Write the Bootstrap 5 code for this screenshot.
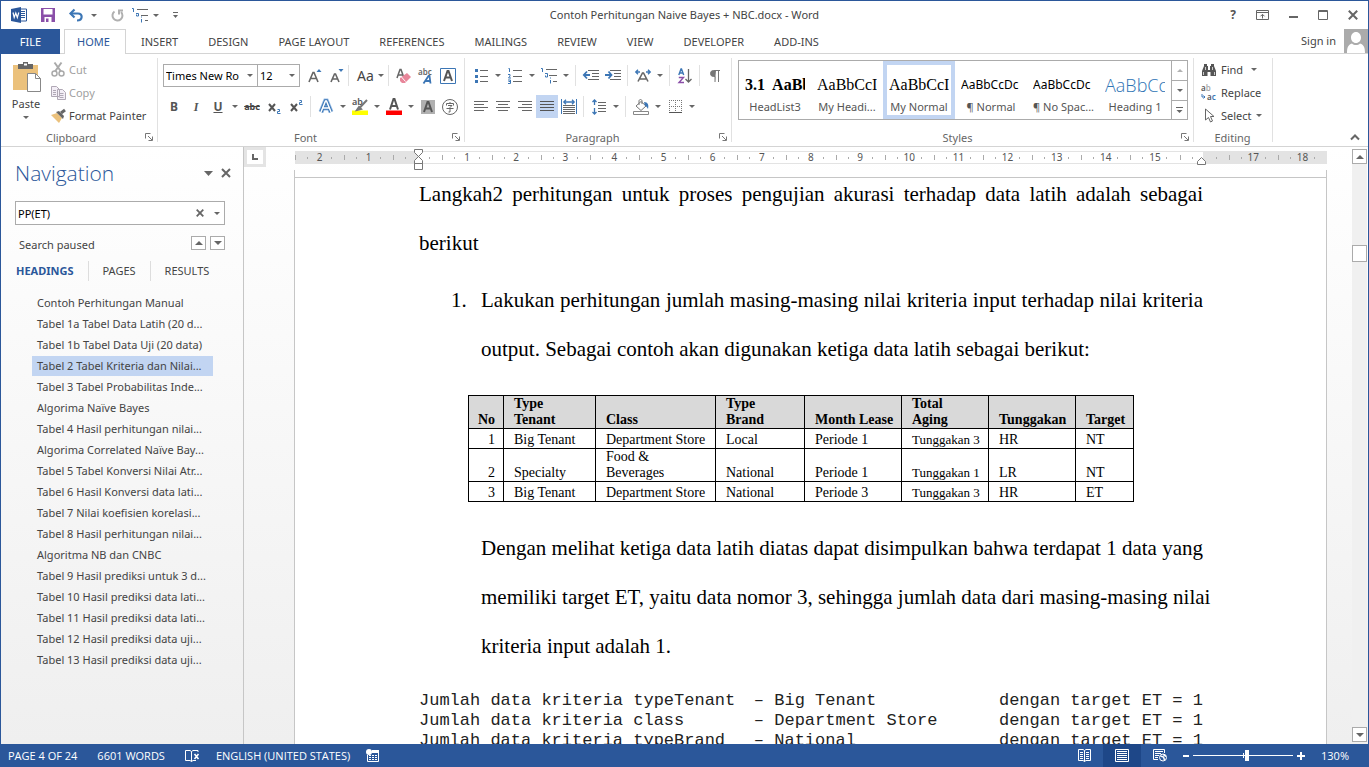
<!DOCTYPE html>
<html lang="en">
<head>
<meta charset="utf-8">
<meta name="viewport" content="width=device-width, initial-scale=1">
<title>Contoh Perhitungan Naive Bayes + NBC.docx - Word</title>
<link href="https://cdn.jsdelivr.net/npm/bootstrap@5.3.0/dist/css/bootstrap.min.css" rel="stylesheet">
<style>
:root{--word:#2b579a;--ink:#444;--line:#d4d4d4;--pick:#c2d5f2}
body{font:11px/16px "Noto Sans","Open Sans",sans-serif;color:var(--ink);background:#fff}
.app{height:100vh;border:1px solid var(--word);border-bottom:0;overflow:hidden}
button,input{font:inherit;color:inherit}
.plain{background:none;border:0;padding:0;display:inline-flex;align-items:center;justify-content:center;color:inherit;flex:none}
svg{display:block;flex:none;overflow:visible}
.titlebar{height:28px}
.qat{left:10px;top:0;height:28px}
.qgap{margin-left:14px}
.winbtns{right:10px;top:0;height:28px}
.car{width:0;height:0;border:3px solid transparent;border-top-color:#666;border-bottom:0;flex:none}
.car-up{border:3px solid transparent;border-bottom-color:#666;border-top:0}
.car-lg{border-width:4px 4px 0}
.car-up.car-lg{border-width:0 4px 4px}
.tabs{height:25px;border-bottom:1px solid var(--line)}
.tabs .nav-link{padding:0 15px;height:25px;line-height:25px;color:var(--ink);border:0;border-radius:0;margin-right:0}
.tabs .file{background:var(--word);color:#fff;width:59px;padding:0;text-align:center;margin-right:4px}
.tabs .home{background:#fff;color:var(--word);border:1px solid var(--line);border-bottom:0;padding:0 12px;line-height:24px;width:62px}
.avatar{width:24px;height:24px}
.ribbon{height:93px;border-bottom:1px solid var(--line)}
.grp{border-right:1px solid #e1e1e1;margin:4px 0 4px;height:84px;position:relative;flex:none}
.grp-name{height:16px;color:#666;text-align:center}
.launch{position:absolute;right:4px;bottom:1px}
.g-clip{width:157px}.g-font{width:307px;padding-left:5px}.g-para{width:267px;padding-left:5px}
.g-style{width:462px;padding-left:6px}.g-edit{width:79px;padding-left:7px}
.tools{height:72px}
.g-style .tools{padding-top:2px}
.paste{width:50px}
.trow{height:23px;margin-bottom:8px}
.trow.first{margin-top:6px}
.ib{width:22px;height:23px}
.ic{width:12px;height:23px}
.vsep{width:1px;height:21px;background:#e1e1e1;margin:0 4px 0 3px;flex:none}
.combo{height:23px;border:1px solid #ababab;background:#fff}
.combo input{border:0;outline:0;padding:0 0 0 2px;height:21px;color:#000;background:none;min-width:0}
.c-face{width:95px}.c-size{width:43px;margin-left:-1px}
.on{background:var(--pick)}
.b{font-size:12px;font-weight:700;color:#555}
.dim{color:#a0a0a0}
.crow{height:23px;gap:4px;justify-content:flex-start}
.gallery{border:1px solid #ababab;height:60px;width:450px}
.sty{width:72px;height:58px;border:0;background:#fff;padding:0 6px;color:#555;white-space:nowrap;overflow:hidden}
.sty .smp{height:28px;line-height:28px;overflow:hidden;color:#000;font-size:12px;margin-top:5px;text-align:left}
.sty.cur{box-shadow:inset 0 0 0 4px var(--pick)}
.sty .serif{font-family:"Liberation Serif",serif;font-size:16px}
.sty .h1s{font-family:"Open Sans",sans-serif;font-size:18px;font-weight:300;color:#2e74b5}
.gscroll{width:16px;border-left:1px solid #ababab}
.gscroll button{height:19px}
.gscroll button+button{border-top:1px solid #ababab;height:20px}
.work{min-height:0;background:linear-gradient(#fff,#efefef)}
.navpane{width:243px;border-right:1px solid #c6c6c6;padding:0 18px 0 14px;flex:none}
.navpane h1{font-family:"Open Sans",sans-serif;font-size:21px;line-height:28px;font-weight:300;color:var(--word);margin:0}
.nhead{margin:12px -6px 0 0;height:28px}
.search{height:24px;border:1px solid #ababab;background:#fff;margin-top:14px}
.clear{margin-right:6px}
.mini{width:15px;height:14px;border:1px solid #ababab;background:#fff;padding:0}
.ntabs{height:20px;margin-top:8px}
.ntabs a{color:var(--ink);text-decoration:none;padding:0 14px;line-height:20px;border-right:1px solid #ddd}
.ntabs a:first-child{padding-left:1px;color:var(--word);font-weight:700}
.ntabs a:last-child{border:0}
.heads{margin:12px 12px 0 17px}
.heads a{display:block;height:20px;line-height:20px;margin-bottom:1px;padding-left:5px;color:var(--ink);text-decoration:none;white-space:nowrap}
.canvas{min-width:0;padding-right:1px}
.docarea{min-width:0}
.tabsel{width:22px;height:20px;border:3px solid #e4e4e4;background:#fff;flex:none}
.ruler{height:13px;margin:4px 25px 0 29px;border:1px solid #e3e3e3;border-width:1px 0;background:linear-gradient(90deg,#e3e3e3 12%,#fff 12%,#fff 88%,#e3e3e3 88%);line-height:11px;font-size:10px;color:#555}
.cm{background:linear-gradient(#aaa,#aaa) 0 3px/1px 5px no-repeat,linear-gradient(#aaa,#aaa) 25% 5px/1px 2px no-repeat,linear-gradient(#aaa,#aaa) 75% 5px/1px 2px no-repeat;text-align:center;height:11px;flex:1 1 0;position:relative}
.cm svg{position:absolute;left:50%;margin-left:-4px;z-index:1}
.cm .m-l{top:-3px}
.cm .m-r{top:5px;margin-left:-7px}
.sheet{margin:3px 25px 0 50px;background:#fff;border:1px solid #c6c6c6;border-width:0 1px;padding:0 123px 0 124px;position:relative;font:21px/49px "Liberation Serif",serif;color:#000;min-height:0;overflow:hidden}
.sheet::before{content:"";position:absolute;left:0;right:0;top:7px;border-top:1px solid #c6c6c6}
.sheet p,.sheet li{margin:0;text-align:justify}
.sheet ol{margin:8px 0 0;padding-left:62px;list-style:none;counter-reset:step}
.sheet li::before{counter-increment:step;content:counter(step) ".";display:inline-block;width:30px;margin-left:-30px;text-align:left}
.cont{padding-left:62px}
.tblwrap{margin:21px 69px 22px 49px}
.dtab{width:100%;border-collapse:collapse;font:14px/16px "Liberation Serif",serif;color:#000;table-layout:fixed}
.dtab td,.dtab th{border:1px solid #000;padding:0 0 0 10px;vertical-align:bottom;white-space:nowrap}
.dtab th{background:#d9d9d9}
.dtab td{height:20px}
.dtab td:first-child,.dtab th:first-child{text-align:right;padding:0 8px 0 0}
.dtab .sm{font-size:13px}
.code{font:17px/20px "Liberation Mono",monospace;margin-top:20px;color:#222}
.code>div{display:grid;grid-template-columns:334fr 240fr 208fr;white-space:nowrap}
.code span:last-child{text-align:right}
.vscroll{width:15px;background:#f0f0f0;margin-top:2px;margin-bottom:2px}
.vscroll button{width:15px;height:15px;border:1px solid #ababab;background:#fff;padding:0}
.vthumb{height:17px;border:1px solid #ababab;background:#fff;margin-top:81px}
.status{height:23px;background:var(--word);color:#fff;margin:0 -1px;padding-left:8px;font-family:"Open Sans","Noto Sans",sans-serif}
.vw{width:38px;height:23px}
.vw.act{background:#1e4788}
.zoom{appearance:none;width:100px;height:23px;background:linear-gradient(#fff,#fff) 0 11px/100% 1px no-repeat,linear-gradient(#fff,#fff) 50% 9px/1px 5px no-repeat}
.zoom::-webkit-slider-thumb{appearance:none;width:4px;height:11px;background:#fff}
</style>
</head>
<body>
<svg width="0" height="0" class="position-absolute" aria-hidden="true"><defs>
<g id="launch" fill="none" stroke="#777"><path d="M.5 5.5v-5h5M3 3l4 4M7.500 3.500v4h-4"/></g>
</defs></svg>
<div class="app d-flex flex-column">

<header class="titlebar position-relative d-flex align-items-center justify-content-center flex-shrink-0">
  <div class="qat position-absolute d-flex align-items-center">
    <svg width="16" height="16" viewBox="0 0 16 16"><path d="M9 2h6.500v12H9" fill="#fff" stroke="#2b579a"/><path d="M10 4.500h4M10 6.500h4M10 8.500h4M10 10.500h4" stroke="#2b579a"/><path d="M0 2 10 0v16L0 14z" fill="#2b579a"/><path d="M2 5.500 3.200 10.500 4.800 6l1.500 4.500L7.800 5.500" fill="none" stroke="#fff" stroke-width="1.200"/></svg>
    <button class="plain qgap" aria-label="Save"><svg width="14" height="14" viewBox="0 0 14 14"><path d="M0 0h14v14H0z" fill="#8a4fa8"/><path d="M2.500 1h9v5.500h-9zM3.500 9h7v5h-7z" fill="#fff"/><path d="M5 10.500h2.500V14H5z" fill="#8a4fa8"/></svg></button>
    <button class="plain qgap" aria-label="Undo"><svg width="14" height="13" viewBox="0 0 14 13"><path d="M1.500 4.500H9c5 0 5 7-1 7" fill="none" stroke="#3c76b5" stroke-width="2.200"/><path d="M5.500.5l-4 4 4 4" fill="none" stroke="#3c76b5" stroke-width="2.200"/></svg></button>
    <span class="car ms-2"></span>
    <button class="plain qgap" aria-label="Redo"><svg width="13" height="13" viewBox="0 0 13 13"><path d="M3.500 2.500A5 5 0 1 0 10 3" fill="none" stroke="#b0b0b0" stroke-width="2"/><path d="M8 5.500V1M7 1.500h5" fill="none" stroke="#b0b0b0" stroke-width="2"/></svg></button>
    <button class="plain ms-2" aria-label="Multilevel list"><svg width="17" height="16" viewBox="0 0 17 16"><path d="M5 2.500h11M9 8.500h7M13 13.500h3" stroke="#666"/><path d="M0 1.500h1.500V5M4 6.500h2.500V9H4.500V7.500M9.500 9.500v1M9.500 12v3.500" fill="none" stroke="#3c76b5"/></svg></button>
    <span class="car ms-1"></span>
    <button class="plain qgap" aria-label="Customize Quick Access Toolbar"><svg width="5" height="6" viewBox="0 0 5 6"><path d="M0 .5h5" stroke="#666"/><path d="M0 3h5L2.500 6z" fill="#666"/></svg></button>
  </div>
  <div>Contoh Perhitungan Naive Bayes + NBC.docx - Word</div>
  <div class="winbtns position-absolute d-flex align-items-center gap-3">
    <button class="plain b me-1" aria-label="Help">?</button>
    <button class="plain me-1" aria-label="Ribbon display"><svg width="13" height="10" viewBox="0 0 13 10"><path d="M.5.5h12v9H.5zM.5 2.500h12M6.500 8.500v-4M4.500 6.300l2-2 2 2" fill="none" stroke="#666"/></svg></button>
    <button class="plain me-1" aria-label="Minimize"><svg width="9" height="10" viewBox="0 0 9 10"><path d="M0 7h9" stroke="#666" stroke-width="2"/></svg></button>
    <button class="plain me-1" aria-label="Maximize"><svg width="10" height="10" viewBox="0 0 10 10"><path d="M.5.5h9v9H.5zM0 1.500h10" fill="none" stroke="#666"/></svg></button>
    <button class="plain" aria-label="Close"><svg width="10" height="10" viewBox="0 0 10 10"><path d="M.8.8l8.400 8.400M9.200.8.8 9.200" stroke="#666" stroke-width="2"/></svg></button>
  </div>
</header>

<nav class="tabs nav nav-tabs flex-nowrap flex-shrink-0">
  <a class="nav-link file" href="#">FILE</a>
  <a class="nav-link home" href="#">HOME</a>
  <a class="nav-link" href="#">INSERT</a>
  <a class="nav-link" href="#">DESIGN</a>
  <a class="nav-link" href="#">PAGE LAYOUT</a>
  <a class="nav-link" href="#">REFERENCES</a>
  <a class="nav-link" href="#">MAILINGS</a>
  <a class="nav-link" href="#">REVIEW</a>
  <a class="nav-link" href="#">VIEW</a>
  <a class="nav-link" href="#">DEVELOPER</a>
  <a class="nav-link" href="#">ADD-INS</a>
  <a class="ms-auto text-reset text-decoration-none d-flex align-items-center gap-2" href="#">Sign in
    <svg class="avatar" viewBox="0 0 24 24"><path d="M0 0h24v24H0z" fill="#ababab"/><path d="M12 3c3 0 5 2.500 5 5.500S15 14 12 14s-5-2.500-5-5.500S9 3 12 3zM3 24c0-5 1-8.500 5-9.500 2 2 6 2 8 0 4 1 5 4.500 5 9.500z" fill="#fff"/></svg></a>
</nav>

<section class="ribbon d-flex flex-shrink-0">
  <div class="grp g-clip">
    <div class="tools d-flex">
      <button class="plain paste flex-column justify-content-start">
        <svg class="mt-1" width="29" height="30" viewBox="0 0 29 30"><path d="M1 3h25v25H1z" fill="#ebc17c"/><path d="M6 2h5V0h5v2h5v5H6z" fill="#666"/><path d="M12 1.500h3v2h-3z" fill="#fff"/><path d="M15.500 11.500h8l5 5v13h-13z" fill="#fff" stroke="#888"/><path d="M23.500 11.500v5h5" fill="none" stroke="#888"/></svg>
        <span class="mt-1">Paste</span><span class="car mt-1"></span></button>
      <div class="d-flex flex-column align-items-start">
        <button class="plain crow dim"><svg width="14" height="15" viewBox="0 0 14 15"><path d="M3.500.5l6.500 9M10.500.5l-6.500 9" stroke="#aaa" stroke-width="2"/><circle cx="3.500" cy="11.500" r="2.500" fill="none" stroke="#aaa" stroke-width="1.500"/><circle cx="10.500" cy="11.500" r="2.500" fill="none" stroke="#aaa" stroke-width="1.500"/></svg>Cut</button>
        <button class="plain crow dim"><svg width="14" height="14" viewBox="0 0 14 14"><path d="M.5.5h5l3 3v7h-8zM6.500 3.500h5l3 3v7h-8z" fill="#f3eef6" stroke="#b0a8b5"/><path d="M2 4.500h3M2 6.500h3M2 8.500h3M8.500 7.500h4M8.500 9.500h4M8.500 11.500h4" stroke="#b0a8b5"/></svg>Copy</button>
        <button class="plain crow"><svg width="14" height="14" viewBox="0 0 14 14"><path d="M0 6l6-2 5 5-3 5z" fill="#ebc17c"/><path d="M5 3l3-1 5 5-1 3z" fill="#666"/><path d="M10 4l4-3" stroke="#666" stroke-width="3"/></svg>Format Painter</button>
      </div>
    </div>
    <div class="grp-name pe-3">Clipboard</div>
    <button class="plain launch" aria-label="Clipboard options"><svg width="8" height="8"><use href="#launch"/></svg></button>
  </div>

  <div class="grp g-font">
    <div class="tools d-flex flex-column">
      <div class="trow first d-flex align-items-center">
        <div class="combo c-face d-flex align-items-center"><input class="flex-grow-1 w-100" aria-label="Font" value="Times New Ro"><span class="car me-1"></span></div>
        <div class="combo c-size d-flex align-items-center"><input class="flex-grow-1 w-100" aria-label="Font size" value="12"><span class="car me-1"></span></div>
        <button class="plain ib ms-1" aria-label="Grow font"><svg width="14" height="16" viewBox="0 0 14 16"><path d="M1 14 5 4.500h1L10 14M2.500 10.500h6" fill="none" stroke="#666" stroke-width="1.600"/><path d="M8.500 4h5L11 1z" fill="#3c76b5"/></svg></button>
        <button class="plain ib" aria-label="Shrink font"><svg width="14" height="16" viewBox="0 0 14 16"><path d="M1 14l3.500-8h1L9 14M2.500 11h5" fill="none" stroke="#666" stroke-width="1.600"/><path d="M8.500 1h5L11 4z" fill="#3c76b5"/></svg></button>
        <span class="vsep ms-0"></span>
        <button class="plain ps-1 gap-1 fs-6"><small>Aa</small><span class="car"></span></button>
        <span class="vsep ms-1"></span>
        <button class="plain ib" aria-label="Clear formatting"><svg width="15" height="16" viewBox="0 0 15 16"><path d="M1 10 4 1.500h1L8 10M2 7h5" fill="none" stroke="#666" stroke-width="1.500"/><path d="M4 10l7-5 4 4-6 6H6l-2-2z" fill="#e8869a"/><path d="M5.500 9l4 4.500" stroke="#fff"/></svg></button>
        <button class="plain ib" aria-label="Text effects"><svg width="15" height="16" viewBox="0 0 15 16"><text x="0" y="7" font-size="8" font-weight="600" fill="#666">abc</text><path d="M5.500 15.500 10.500 8h1l1 7.500M7.500 13h5" fill="none" stroke="#3c76b5" stroke-width="1.800"/></svg></button>
        <button class="plain ib" aria-label="Character border"><svg width="16" height="16" viewBox="0 0 16 16"><path d="M.5.5h15v15H.5z" fill="none" stroke="#3c76b5"/><path d="M4 13 7.500 3h1L12 13M5 9.500h6" fill="none" stroke="#555" stroke-width="2"/></svg></button>
      </div>
      <div class="trow d-flex align-items-center">
        <button class="plain ib b">B</button>
        <button class="plain ib b fst-italic" style="font-family:'Liberation Serif',serif">I</button>
        <button class="plain ib b text-decoration-underline">U</button><button class="plain ic" aria-label="Underline style"><span class="car"></span></button>
        <button class="plain ib text-decoration-line-through fw-bold" style="font-size:9px">abc</button>
        <button class="plain ib" aria-label="Subscript"><svg width="13" height="14" viewBox="0 0 13 14"><path d="M1 4l6 7M7 4l-6 7" stroke="#555" stroke-width="2"/><path d="M9.500 9.500h2v2h-2v2h3" fill="none" stroke="#3c76b5"/></svg></button>
        <button class="plain ib" aria-label="Superscript"><svg width="13" height="14" viewBox="0 0 13 14"><path d="M1 4l6 7M7 4l-6 7" stroke="#555" stroke-width="2"/><path d="M9.500.5h2v2h-2v2h3" fill="none" stroke="#3c76b5"/></svg></button>
        <span class="vsep"></span>
        <button class="plain ib" aria-label="Text outline"><svg width="14" height="15" viewBox="0 0 14 15"><path d="M2 13 6.500 2h1L12 13M4 9h6" fill="none" stroke="#9dc0e6" stroke-width="5"/><path d="M2 13 6.500 2h1L12 13M4 9h6" fill="none" stroke="#3c76b5" stroke-width="3.500"/><path d="M2 13 6.500 2h1L12 13M4 9h6" fill="none" stroke="#fff" stroke-width="1.500"/></svg></button><button class="plain ic" aria-label="Text outline options"><span class="car"></span></button>
        <button class="plain ib" aria-label="Highlight"><svg width="16" height="17" viewBox="0 0 16 17"><path d="M0 12.500h16V17H0z" fill="#ff0"/><text x="0" y="7" font-size="9" font-weight="600" fill="#555">ab</text><path d="M7 10.500l8-8.500M5 12l4-1-2-2z" stroke="#777" stroke-width="2"/></svg></button><button class="plain ic" aria-label="Highlight color"><span class="car"></span></button>
        <button class="plain ib" aria-label="Font color"><svg width="16" height="17" viewBox="0 0 16 17"><path d="M0 12.500h16V17H0z" fill="red"/><path d="M4 11.500 7.500 1h1L12 11.500M5 8h6" fill="none" stroke="#555" stroke-width="2"/></svg></button><button class="plain ic" aria-label="Font color options"><span class="car"></span></button>
        <button class="plain ib" aria-label="Character shading"><svg width="14" height="14" viewBox="0 0 14 14"><path d="M0 0h14v14H0z" fill="#b0b0b0"/><path d="M3 12 6.500 2h1L11 12M4 8.500h6" fill="none" stroke="#555" stroke-width="2"/></svg></button>
        <button class="plain ib" aria-label="Enclose characters"><svg width="16" height="16" viewBox="0 0 16 16"><circle cx="8" cy="8" r="7.500" fill="none" stroke="#666"/><path d="M8 3v1.500M4.500 6.500v-2h7v2M6 6.500h4L8 8.500V13H6.500M4.500 9.500h7" fill="none" stroke="#666"/></svg></button>
      </div>
    </div>
    <div class="grp-name pe-3">Font</div>
    <button class="plain launch" aria-label="Font options"><svg width="8" height="8"><use href="#launch"/></svg></button>
  </div>

  <div class="grp g-para">
    <div class="tools d-flex flex-column">
      <div class="trow first d-flex align-items-center">
        <button class="plain ib" aria-label="Bullets"><svg width="13" height="14" viewBox="0 0 13 14"><path d="M5 1.500h8M5 7.500h8M5 12.500h8" stroke="#666"/><path d="M0 0h3v3H0zM0 6h3v3H0zM0 11h3v3H0z" fill="#3c76b5"/></svg></button><button class="plain ic" aria-label="Bullet library"><span class="car"></span></button>
        <button class="plain ib" aria-label="Numbering"><svg width="14" height="16" viewBox="0 0 14 16"><path d="M5 2.500h9M5 8.500h9M5 13.500h9" stroke="#666"/><path d="M.5.500h1V4M0 6.500h2v1.500L.5 10H3M0 12h2.500v3.500H0M.5 13.500h2" fill="none" stroke="#3c76b5"/></svg></button><button class="plain ic" aria-label="Numbering library"><span class="car"></span></button>
        <button class="plain ib" aria-label="Multilevel list"><svg width="16" height="16" viewBox="0 0 16 16"><path d="M5 1.500h11M8 7.500h8M12 13.500h4" stroke="#666"/><path d="M0 .5h1.500V4M4 5.500h2.500V9H4.500V7.500M9.500 9.500v1M9.500 12v3.500" fill="none" stroke="#3c76b5"/></svg></button><button class="plain ic" aria-label="List library"><span class="car"></span></button>
        <span class="vsep"></span>
        <button class="plain ib" aria-label="Decrease indent"><svg width="16" height="11" viewBox="0 0 16 11"><path d="M5 .5h11M9 3.500h7M9 6.500h7M5 9.500h11" stroke="#666"/><path d="M7 5H1M4 1.500.8 5 4 8.500" fill="none" stroke="#3c76b5" stroke-width="1.800"/></svg></button>
        <button class="plain ib" aria-label="Increase indent"><svg width="16" height="11" viewBox="0 0 16 11"><path d="M5 .5h11M9 3.500h7M9 6.500h7M5 9.500h11" stroke="#666"/><path d="M0 5h6M3.500 1.500 6.500 5l-3 3.500" fill="none" stroke="#3c76b5" stroke-width="1.800"/></svg></button>
        <span class="vsep"></span>
        <button class="plain ib" aria-label="Asian layout"><svg width="16" height="13" viewBox="0 0 16 13"><path d="M3 12.500 7.500 4h1L13 12.500M5 10h6" fill="none" stroke="#666" stroke-width="1.600"/><path d="M5 3H1M3 .8.8 3 3 5.200M11 3h4M13 .8 15.200 3 13 5.200" fill="none" stroke="#3c76b5" stroke-width="1.400"/></svg></button><button class="plain ic" aria-label="Asian layout options"><span class="car"></span></button>
        <span class="vsep"></span>
        <button class="plain ib" aria-label="Sort"><svg width="14" height="16" viewBox="0 0 14 16"><path d="M.8 7 3 1h.5l2.200 6M1.500 5h3.500" fill="none" stroke="#3c76b5" stroke-width="1.400"/><path d="M.8 9.500h4.700L1 14.500h5" fill="none" stroke="#8a4fa8" stroke-width="1.400"/><path d="M10.500 1v13M7.500 11l3 3 3-3" fill="none" stroke="#666" stroke-width="1.300"/></svg></button>
        <span class="vsep"></span>
        <button class="plain ib" aria-label="Show marks"><svg width="10" height="12" viewBox="0 0 10 12"><path d="M6 .5H3.500a3 3 0 0 0 0 6H5V12M5.500.5H10M8.500.5V12" fill="#777" stroke="#777"/><path d="M6.500 1v11h1V1z" fill="#fff"/></svg></button>
      </div>
      <div class="trow d-flex align-items-center">
        <button class="plain ib" aria-label="Align left"><svg width="14" height="11" viewBox="0 0 14 11"><path d="M0 .5h14M0 3.500h10M0 6.500h14M0 9.500h10" stroke="#666"/></svg></button>
        <button class="plain ib" aria-label="Center"><svg width="14" height="11" viewBox="0 0 14 11"><path d="M0 .5h14M2 3.500h10M0 6.500h14M2 9.500h10" stroke="#666"/></svg></button>
        <button class="plain ib" aria-label="Align right"><svg width="14" height="11" viewBox="0 0 14 11"><path d="M0 .5h14M4 3.500h10M0 6.500h14M4 9.500h10" stroke="#666"/></svg></button>
        <button class="plain ib on" aria-label="Justify"><svg width="14" height="11" viewBox="0 0 14 11"><path d="M0 .5h14M0 3.500h14M0 6.500h14M0 9.500h14" stroke="#555"/></svg></button>
        <button class="plain ib" aria-label="Distributed"><svg width="16" height="16" viewBox="0 0 16 16"><path d="M.5 0v15M15.500 0v15" stroke="#3c76b5"/><path d="M3 3h10M5 .8 2.800 3 5 5.200M11 .8 13.200 3 11 5.200" fill="none" stroke="#3c76b5" stroke-width="1.300"/><path d="M2 6.500h12M2 8.500h12M2 10.500h12M2 12.500h12M2 14.500h12" stroke="#666"/></svg></button>
        <span class="vsep"></span>
        <button class="plain ib" aria-label="Line spacing"><svg width="14" height="16" viewBox="0 0 14 16"><path d="M6 3.500h8M6 6.500h8M6 9.500h8M6 12.500h8" stroke="#666"/><path d="M2.500 1v5M.5 3l2-2 2 2M2.500 9v6M.5 13l2 2 2-2" fill="none" stroke="#3c76b5" stroke-width="1.300"/></svg></button><button class="plain ic" aria-label="Line spacing options"><span class="car"></span></button>
        <span class="vsep"></span>
        <button class="plain ib" aria-label="Shading"><svg width="16" height="16" viewBox="0 0 16 16"><path d="M.5 12.500h15v3H.5z" fill="#fff" stroke="#888"/><path d="M3 7l5-4.500L13 7l-5 4.500z" fill="#fff" stroke="#777"/><path d="M6 6V2c0-2 3-2 3 0v3" fill="none" stroke="#777"/><path d="M11 3c4 0 5 3 4 7-1-2-2-3-3-3z" fill="#3c76b5"/></svg></button><button class="plain ic" aria-label="Shading color"><span class="car"></span></button>
        <button class="plain ib" aria-label="Borders"><svg width="13" height="13" viewBox="0 0 13 13"><path d="M.5 0v12M12.500 0v12M0 .5h13M6.500 0v12M0 6.500h13" fill="none" stroke="#777" stroke-dasharray="1 1"/><path d="M0 12.500h13" stroke="#555"/></svg></button><button class="plain ic" aria-label="Border options"><span class="car"></span></button>
      </div>
    </div>
    <div class="grp-name pe-3">Paragraph</div>
    <button class="plain launch" aria-label="Paragraph options"><svg width="8" height="8"><use href="#launch"/></svg></button>
  </div>

  <div class="grp g-style">
    <div class="tools">
      <div class="gallery d-flex">
        <button class="sty"><div class="smp serif fw-bold">3.1&nbsp; AaBbC</div>HeadList3</button>
        <button class="sty"><div class="smp serif">AaBbCcI</div>My Headi...</button>
        <button class="sty cur"><div class="smp serif">AaBbCcI</div>My Normal</button>
        <button class="sty"><div class="smp">AaBbCcDc</div>¶ Normal</button>
        <button class="sty"><div class="smp">AaBbCcDc</div>¶ No Spac...</button>
        <button class="sty"><div class="smp h1s">AaBbCcD</div>Heading 1</button>
        <div class="gscroll d-flex flex-column">
          <button class="plain" aria-label="Previous styles"><span class="car car-up opacity-50"></span></button>
          <button class="plain" aria-label="Next styles"><span class="car"></span></button>
          <button class="plain" aria-label="More styles"><svg width="7" height="7" viewBox="0 0 7 7"><path d="M0 .5h7" stroke="#666"/><path d="M.5 3h6l-3 3z" fill="#666"/></svg></button>
        </div>
      </div>
    </div>
    <div class="grp-name pe-3">Styles</div>
    <button class="plain launch" aria-label="Style options"><svg width="8" height="8"><use href="#launch"/></svg></button>
  </div>

  <div class="grp g-edit">
    <div class="tools d-flex flex-column align-items-start">
      <button class="plain crow"><svg width="16" height="14" viewBox="0 0 16 14"><path d="M3 1h3v2h1v4h2V3h1V1h3v2l2 5v5H9.500V9h-3v4H1V8l2-5z" fill="#555"/><path d="M2.500 9v3M4.500 4v3M11.500 4v3M13.500 9v3" stroke="#ccc"/></svg>Find<span class="car ms-1"></span></button>
      <button class="plain crow"><svg width="16" height="16" viewBox="0 0 16 16"><text x="0" y="6" font-size="8" font-weight="600" fill="#555">a<tspan fill="#aaa">b</tspan></text><text x="6" y="15" font-size="8" font-weight="600" fill="#555">a<tspan fill="#3c76b5">c</tspan></text><path d="M1 9v3h3M2.500 10.500 4 12l-1.500 1.500" fill="none" stroke="#3c76b5"/></svg>Replace</button>
      <button class="plain crow"><svg width="16" height="15" viewBox="0 0 16 15"><path d="M4.500 1v11l3-2.500 2 4.500 2-1-2-4.500h3.500z" fill="#fff" stroke="#666"/></svg>Select<span class="car"></span></button>
    </div>
    <div class="grp-name pe-2">Editing</div>
  </div>
  <button class="plain ms-auto align-self-end me-2 mb-1" aria-label="Collapse ribbon"><svg width="10" height="8" viewBox="0 0 10 8"><path d="M1 5.500l4-4 4 4" fill="none" stroke="#666" stroke-width="2"/></svg></button>
</section>

<main class="work d-flex flex-grow-1">
  <aside class="navpane">
    <div class="nhead d-flex align-items-center"><h1>Navigation</h1>
      <button class="plain ms-auto" aria-label="Pane options"><svg width="9" height="5" viewBox="0 0 9 5"><path d="M0 0h9L4.500 5z" fill="#666"/></svg></button>
      <button class="plain ms-2" aria-label="Close pane"><svg width="10" height="10" viewBox="0 0 10 10"><path d="M1 1l8 8M9 1 1 9" stroke="#666" stroke-width="2"/></svg></button></div>
    <div class="combo search d-flex align-items-center">
      <input class="flex-grow-1" aria-label="Search document" value="PP(ET)">
      <button class="plain clear" aria-label="Clear search"><svg width="8" height="8" viewBox="0 0 8 8"><path d="M.7.7l6.600 6.600M7.300.7.7 7.300" stroke="#666" stroke-width="1.800"/></svg></button>
      <span class="car mx-1"></span></div>
    <div class="d-flex align-items-center mt-2"><span class="ps-1 me-auto pt-1">Search paused</span>
      <button class="mini d-flex align-items-center justify-content-center" aria-label="Previous result"><span class="car car-up car-lg"></span></button>
      <button class="mini d-flex align-items-center justify-content-center ms-1" aria-label="Next result"><span class="car car-lg"></span></button></div>
    <nav class="ntabs d-flex"><a href="#">HEADINGS</a><a href="#">PAGES</a><a href="#">RESULTS</a></nav>
    <nav class="heads">
      <a href="#">Contoh Perhitungan Manual</a>
      <a href="#">Tabel 1a Tabel Data Latih (20 d...</a>
      <a href="#">Tabel 1b Tabel Data Uji (20 data)</a>
      <a href="#" class="on">Tabel 2 Tabel Kriteria dan Nilai...</a>
      <a href="#">Tabel 3 Tabel Probabilitas Inde...</a>
      <a href="#">Algorima Naïve Bayes</a>
      <a href="#">Tabel 4 Hasil perhitungan nilai...</a>
      <a href="#">Algorima Correlated Naïve Bay...</a>
      <a href="#">Tabel 5 Tabel Konversi Nilai Atr...</a>
      <a href="#">Tabel 6 Hasil Konversi data lati...</a>
      <a href="#">Tabel 7 Nilai koefisien korelasi...</a>
      <a href="#">Tabel 8 Hasil perhitungan nilai...</a>
      <a href="#">Algoritma NB dan CNBC</a>
      <a href="#">Tabel 9 Hasil prediksi untuk 3 d...</a>
      <a href="#">Tabel 10 Hasil prediksi data lati...</a>
      <a href="#">Tabel 11 Hasil prediksi data lati...</a>
      <a href="#">Tabel 12 Hasil prediksi data uji...</a>
      <a href="#">Tabel 13 Hasil prediksi data uji...</a>
    </nav>
  </aside>

  <div class="canvas flex-grow-1 d-flex">
    <div class="docarea flex-grow-1 d-flex flex-column">
      <div class="d-flex align-items-start flex-shrink-0 position-relative z-1">
        <button class="plain tabsel" aria-label="Tab stop"><svg width="6" height="6" viewBox="0 0 6 6"><path d="M1 0v5h5" fill="none" stroke="#666" stroke-width="2"/></svg></button>
        <div class="ruler flex-grow-1 d-flex">
          <span class="cm">2</span><span class="cm">1</span>
          <span class="cm"><svg class="m-l" width="9" height="22" viewBox="0 0 9 22"><path d="M.5.500h8v3l-8 8v3h8v-3l-8-8zM.5 14.500h8v6h-8z" fill="#fff" stroke="#777"/></svg></span>
          <span class="cm">1</span><span class="cm">2</span><span class="cm">3</span><span class="cm">4</span><span class="cm">5</span><span class="cm">6</span><span class="cm">7</span><span class="cm">8</span><span class="cm">9</span><span class="cm">10</span><span class="cm">11</span><span class="cm">12</span><span class="cm">13</span><span class="cm">14</span><span class="cm">15</span>
          <span class="cm"><svg class="m-r" width="9" height="8" viewBox="0 0 9 8"><path d="M.5 7.500v-3l4-4 4 4v3z" fill="#fff" stroke="#777"/></svg></span>
          <span class="cm">17</span><span class="cm">18</span>
        </div>
      </div>
      <article class="sheet flex-grow-1" lang="id">
        <p>Langkah2 perhitungan untuk proses pengujian akurasi terhadap data latih adalah sebagai berikut</p>
        <ol><li>Lakukan perhitungan jumlah masing-masing nilai kriteria input terhadap nilai kriteria output. Sebagai contoh akan digunakan ketiga data latih sebagai berikut:</li></ol>
        <div class="tblwrap">
          <table class="dtab">
            <colgroup><col style="width:35px"><col style="width:92px"><col style="width:120px"><col style="width:89px"><col style="width:97px"><col style="width:87px"><col style="width:87px"><col style="width:58px"></colgroup>
            <thead><tr><th>No</th><th>Type<br>Tenant</th><th>Class</th><th>Type<br>Brand</th><th>Month Lease</th><th>Total<br>Aging</th><th>Tunggakan</th><th>Target</th></tr></thead>
            <tbody>
            <tr><td>1</td><td>Big Tenant</td><td>Department Store</td><td>Local</td><td>Periode 1</td><td class="sm">Tunggakan 3</td><td>HR</td><td>NT</td></tr>
            <tr><td>2</td><td>Specialty</td><td>Food &amp;<br>Beverages</td><td>National</td><td>Periode 1</td><td class="sm">Tunggakan 1</td><td>LR</td><td>NT</td></tr>
            <tr><td>3</td><td>Big Tenant</td><td>Department Store</td><td>National</td><td>Periode 3</td><td class="sm">Tunggakan 3</td><td>HR</td><td>ET</td></tr>
            </tbody>
          </table>
        </div>
        <p class="cont">Dengan melihat ketiga data latih diatas dapat disimpulkan bahwa terdapat 1 data yang <span class="text-nowrap">memiliki target ET, yaitu data nomor 3, sehingga jumlah data dari masing-masing nilai</span> kriteria input adalah 1.</p>
        <div class="code">
          <div><span>Jumlah data kriteria typeTenant</span><span>– Big Tenant</span><span>dengan target ET = 1</span></div>
          <div><span>Jumlah data kriteria class</span><span>– Department Store</span><span>dengan target ET = 1</span></div>
          <div><span>Jumlah data kriteria typeBrand</span><span>– National</span><span>dengan target ET = 1</span></div>
        </div>
      </article>
    </div>
    <div class="vscroll d-flex flex-column flex-shrink-0">
      <button class="d-flex align-items-center justify-content-center" aria-label="Scroll up"><span class="car car-up car-lg"></span></button>
      <div class="vthumb"></div>
      <button class="mt-auto d-flex align-items-center justify-content-center" aria-label="Scroll down"><span class="car car-lg"></span></button>
    </div>
  </div>
</main>

<footer class="status d-flex align-items-center flex-shrink-0">
  <span>PAGE 4 OF 24</span>
  <span class="ms-3 ps-1">6601 WORDS</span>
  <button class="plain ms-3 ps-1" aria-label="Proofing"><svg width="15" height="14" viewBox="0 0 15 14"><path d="M6.500 12.500V2.500L5 1.500H.5v10H5zM6.500 2.500 8 1.500h5V3M6.500 12.500l1.500-1h3" fill="none" stroke="#fff"/><path d="M9.500 5l4 5M13.500 5l-4 5" stroke="#fff" stroke-width="1.600"/></svg></button>
  <span class="ms-3">ENGLISH (UNITED STATES)</span>
  <button class="plain ms-3" aria-label="Macro recording"><svg width="13" height="13" viewBox="0 0 13 13"><path d="M1.500 6v6.500h11v-11H7" fill="none" stroke="#fff"/><path d="M6 1h7v3H6z" fill="#fff"/><circle cx="3" cy="3" r="3" fill="#fff"/><path d="M3 6.500h2M6 6.500h2M9 6.500h2M3 8.500h2M6 8.500h2M9 8.500h2M3 10.500h2M6 10.500h2M9 10.500h2" stroke="#fff"/></svg></button>
  <button class="plain vw ms-auto" aria-label="Read mode"><svg width="13" height="13" viewBox="0 0 13 13"><path d="M6.500 12.500V1.500L5 .5H.5v11H5zM6.500 12.500l1.500-1h4.500V.5H8l-1.500 1M2 3.500h3M2 5.500h3M2 7.500h3M2 9.500h3M8 3.500h3M8 5.500h3M8 7.500h3M8 9.500h3" fill="none" stroke="#fff"/></svg></button>
  <button class="plain vw act" aria-label="Print layout"><svg width="14" height="13" viewBox="0 0 14 13"><path d="M.5.5h13v12H.5zM2 2.500h10M2 4.500h10M2 6.500h10M2 8.500h10M2 10.500h10" fill="none" stroke="#fff"/></svg></button>
  <button class="plain vw" aria-label="Web layout"><svg width="14" height="13" viewBox="0 0 14 13"><path d="M5 10.500H.5V.5h11V4M2 2.500h8M2 4.500h6M2 6.500h4M2 8.500h3" fill="none" stroke="#fff"/><circle cx="10" cy="8.500" r="3.500" fill="#2b579a" stroke="#fff"/><path d="M7.500 7l3 1 1 3M10 5.500l3 2" stroke="#fff" stroke-width="1.500" fill="none"/></svg></button>
  <button class="plain ms-1" aria-label="Zoom out"><svg width="6" height="10" viewBox="0 0 6 10"><path d="M0 5h6" stroke="#fff" stroke-width="2"/></svg></button>
  <input class="zoom mx-1" type="range" min="10" max="250" value="140" aria-label="Zoom">
  <button class="plain" aria-label="Zoom in"><svg width="8" height="8" viewBox="0 0 8 8"><path d="M0 4h8M4 0v8" stroke="#fff" stroke-width="2"/></svg></button>
  <span class="ms-3 me-3 pe-1">130%</span>
</footer>
</div>
<script src="https://cdn.jsdelivr.net/npm/bootstrap@5.3.0/dist/js/bootstrap.bundle.min.js"></script>
</body>
</html>
